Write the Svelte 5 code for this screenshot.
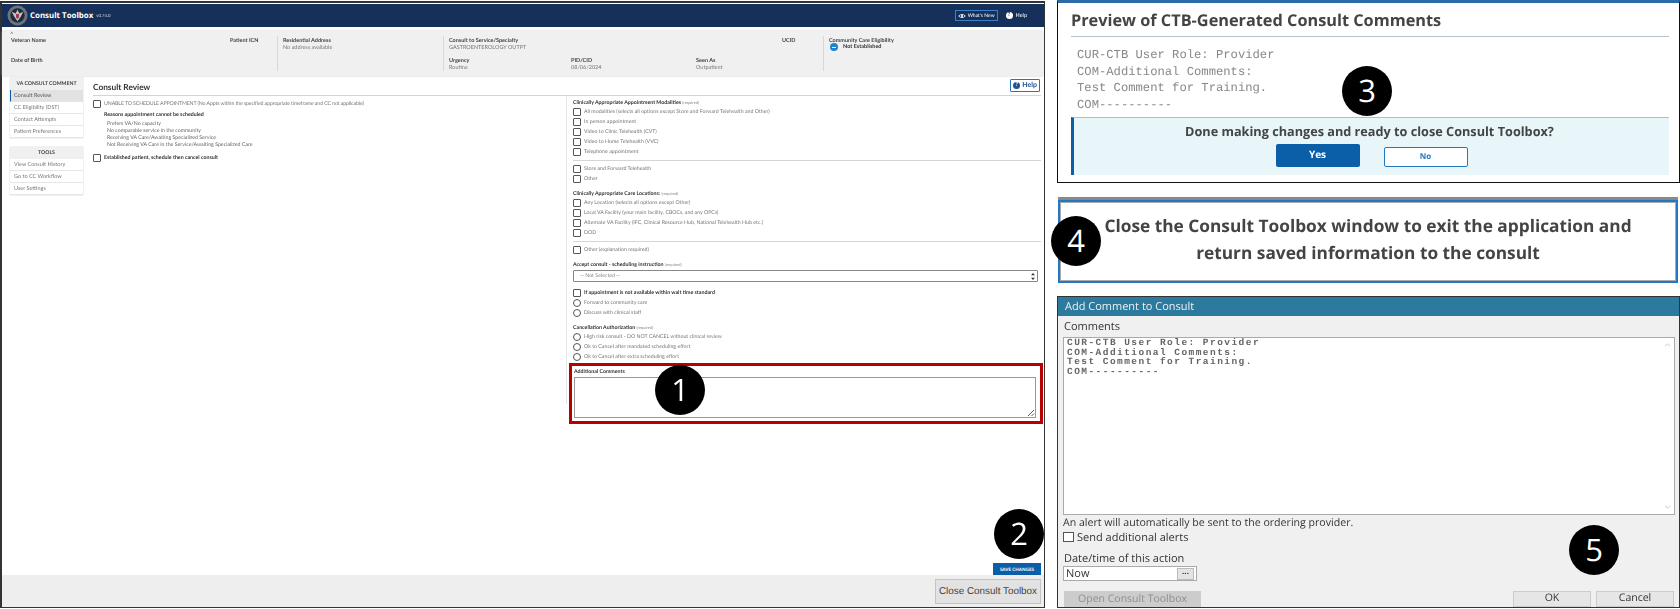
<script lang="ts">
  const patientCols = [
    { label: "Veteran Name", x: 0 },
    { label: "Patient ICN", x: 219 }
  ];
  const navMain = ["Consult Review", "CC Eligibility (DST)", "Contact Attempts", "Patient Preferences"];
  const navTools = ["View Consult History", "Go to CC Workflow", "User Settings"];
  const reasons = [
    "Prefers VA/No capacity",
    "No comparable service in the community",
    "Receiving VA Care/Awaiting Specialized Service",
    "Not Receiving VA Care in the Service/Awaiting Specialized Care"
  ];
  const modalities = [
    "All modalities (selects all options except Store and Forward Telehealth and Other)",
    "In person appointment",
    "Video to Clinic Telehealth (CVT)",
    "Video to Home Telehealth (VVC)",
    "Telephone appointment"
  ];
  const locations = [
    "Any Location (selects all options except Other)",
    "Local VA Facility (your main facility, CBOCs, and any OPCs)",
    "Alternate VA Facility (IFC, Clinical Resource Hub, National Telehealth Hub etc.)",
    "DOD"
  ];
  const cancelOpts = [
    "High risk consult - DO NOT CANCEL without clinical review",
    "Ok to Cancel after mandated scheduling effort",
    "Ok to Cancel after extra scheduling effort"
  ];
  const previewLines = ["CUR-CTB User Role: Provider", "COM-Additional Comments:", "Test Comment for Training.", "COM----------"];
  const badges = [
    { n: 1, x: 680, y: 390 },
    { n: 2, x: 1019, y: 534 },
    { n: 3, x: 1367, y: 91 },
    { n: 4, x: 1076, y: 241 },
    { n: 5, x: 1594, y: 550 }
  ];
</script>

<div class="page">
  <section class="toolbox">
    <header class="topbar">
      <svg class="seal" viewBox="0 0 22 22" aria-hidden="true">
        <circle cx="11" cy="11" r="10.5" fill="#6f7478" />
        <circle cx="11" cy="11" r="7.5" fill="#1d2a44" />
        <path d="M11 5 L13 9 L17 7 L14.5 12 L11 17 L7.5 12 L5 7 L9 9 Z" fill="#c4c4c4" />
        <path d="M9.5 9.5 H12.5 V13 L11 14.5 L9.5 13 Z" fill="#a8323a" />
      </svg>
      <span class="brand">Consult Toolbox</span>
      <span class="version">v0.74.0</span>
      <span class="spacer"></span>
      <span class="whatsnew">
        <svg viewBox="0 0 12 8" width="8" height="6" aria-hidden="true"><path d="M1 4 Q6 -1 11 4 Q6 9 1 4 Z" fill="none" stroke="#fff" stroke-width="1.2" /><circle cx="6" cy="4" r="1.6" fill="#fff" /></svg>
        What's New
      </span>
      <span class="tophelp"><i>?</i> Help</span>
    </header>

    <div class="patient">
      <span class="chev">^</span>
      <div class="pcell first">
        <div class="pair">
          {#each patientCols as c}
            <b style="left:{c.x}px">{c.label}</b>
          {/each}
        </div>
        <div class="pair low"><b>Date of Birth</b></div>
      </div>
      <div class="pcell addr">
        <div class="pair"><b>Residential Address</b><span>No address available</span></div>
      </div>
      <div class="pcell consult">
        <div class="pair"><b>Consult to Service/Specialty</b><span>GASTROENTEROLOGY OUTPT</span></div>
        <div class="pair low triple">
          <div class="urg"><b>Urgency</b><span>Routine</span></div>
          <div class="pid"><b>PID/CID</b><span>08/06/2024</span></div>
          <div><b>Seen As</b><span>Outpatient</span></div>
        </div>
        <b class="ucid">UCID</b>
      </div>
      <div class="pcell elig">
        <div class="pair"><b>Community Care Eligibility</b></div>
        <div class="status"><i></i><strong>Not Established</strong></div>
      </div>
    </div>

    <div class="work">
      <aside class="side">
        <nav class="navcard">
          <h4>VA CONSULT COMMENT</h4>
          {#each navMain as item, i}
            <div class="navrow" class:active={i === 0}>{item}</div>
          {/each}
        </nav>
        <nav class="navcard">
          <h4 class="tools">TOOLS</h4>
          {#each navTools as item}
            <div class="navrow">{item}</div>
          {/each}
        </nav>
      </aside>

      <main class="review">
        <div class="titlerow">
          <h2>Consult Review</h2>
          <span class="helpbtn"><i>?</i>Help</span>
        </div>
        <div class="cols">
          <div class="leftcol">
            <label class="row unable"><span class="box"></span>UNABLE TO SCHEDULE APPOINTMENT (No Appts within the specified appropriate timeframe and CC not applicable)</label>
            <div class="reasons">
              <strong>Reasons appointment cannot be scheduled</strong>
              {#each reasons as r}<div>{r}</div>{/each}
            </div>
            <label class="row est"><span class="box"></span><strong>Established patient, schedule then cancel consult</strong></label>
          </div>

          <div class="rightcol">
            <div class="head">Clinically Appropriate Appointment Modalities <small>(required)</small></div>
            {#each modalities as m}
              <label class="row"><span class="box"></span>{m}</label>
            {/each}
            <hr />
            <label class="row"><span class="box"></span>Store and Forward Telehealth</label>
            <label class="row"><span class="box"></span>Other</label>
            <div class="head gap">Clinically Appropriate Care Locations: <small>(required)</small></div>
            {#each locations as m}
              <label class="row"><span class="box"></span>{m}</label>
            {/each}
            <hr />
            <label class="row"><span class="box"></span>Other (explanation required)</label>
            <div class="head gap">Accept consult - scheduling instruction <small>(required)</small></div>
            <div class="selectbox">
              -- Not Selected --
              <svg viewBox="0 0 5 9" width="4" height="7" aria-hidden="true"><path d="M2.5 0 L5 3 H0 Z M2.5 9 L0 6 H5 Z" fill="#333" /></svg>
            </div>
            <label class="row mt"><span class="box"></span><strong>If appointment is not available within wait time standard</strong></label>
            <label class="row"><span class="box round"></span>Forward to community care</label>
            <label class="row"><span class="box round"></span>Discuss with clinical staff</label>
            <div class="head gap2">Cancellation Authorization <small>(required)</small></div>
            {#each cancelOpts as m}
              <label class="row"><span class="box round"></span>{m}</label>
            {/each}
            <div class="comments">
              <div class="head">Additional Comments</div>
              <div class="area">
                <svg viewBox="0 0 8 8" width="8" height="8" aria-hidden="true"><path d="M1 7 L7 1 M4.5 7 L7 4.5" stroke="#444" stroke-width="0.9" /></svg>
              </div>
            </div>
          </div>
        </div>
        <div class="savewrap"><span class="save">SAVE CHANGES</span></div>
      </main>
    </div>

    <footer class="foot"><span class="closebtn">Close Consult Toolbox</span></footer>
  </section>

  <div class="stack">
    <section class="preview">
      <h3>Preview of CTB-Generated Consult Comments</h3>
      <div class="mono">
        {#each previewLines as l}<div>{l}</div>{/each}
      </div>
      <div class="ask">
        <strong>Done making changes and ready to close Consult Toolbox?</strong>
        <div class="askbtns"><span class="yes">Yes</span><span class="no">No</span></div>
      </div>
    </section>

    <section class="notice">
      <div class="noticein">Close the Consult Toolbox window to exit the application and<br />return saved information to the consult</div>
    </section>

    <section class="dialog">
      <div class="dtitle">Add Comment to Consult</div>
      <div class="dbody">
        <div class="dlabel">Comments</div>
        <div class="dtext">
          <div class="dlines">
            {#each previewLines as l}<div>{l}</div>{/each}
          </div>
          <div class="dscroll">
            <svg viewBox="0 0 8 5" width="7" height="4" aria-hidden="true"><path d="M1 4 L4 1 L7 4" fill="none" stroke="#bbb" /></svg>
            <svg viewBox="0 0 8 5" width="7" height="4" aria-hidden="true"><path d="M1 1 L4 4 L7 1" fill="none" stroke="#bbb" /></svg>
          </div>
        </div>
        <div class="alert">An alert will automatically be sent to the ordering provider.</div>
        <div class="sendrow"><span class="dcheck"></span>Send additional alerts</div>
        <div class="dlabel dt">Date/time of this action</div>
        <div class="nowbox">Now<span class="dots">...</span></div>
        <div class="dbtns">
          <span class="openbtn">Open Consult Toolbox</span>
          <span class="spacer"></span>
          <span class="okbtn">OK</span>
          <span class="okbtn">Cancel</span>
        </div>
      </div>
    </section>
  </div>

  {#each badges as b}
    <div class="badge" style="left:{b.x - 25}px;top:{b.y - 25}px">{b.n}</div>
  {/each}
</div>

<style>
  :global(body) {
    margin: 0;
    background: #fff;
  }

  .page {
    position: relative;
    width: 1680px;
    height: 609px;
    overflow: hidden;
    display: flex;
    font-family: Lato, "Open Sans", sans-serif;
    color: #555;
    text-rendering: geometricPrecision;
  }

  .spacer {
    flex: 1;
  }

  /* left window */
  .toolbox {
    width: 1045px;
    height: 607px;
    margin-top: 1px;
    box-sizing: border-box;
    border: 1px solid #333;
    border-top-width: 2px;
    border-left-width: 2px;
    display: flex;
    flex-direction: column;
    font-size: 5.25px;
    filter: blur(0.4px);
  }

  .topbar {
    height: 23px;
    margin-top: 1px;
    flex: none;
    background: #15305a;
    color: #fff;
    display: flex;
    align-items: center;
    padding: 0 17px 0 5px;
  }

  .seal {
    width: 21px;
    height: 21px;
    margin-right: 2px;
  }

  .brand {
    font-family: "Open Sans", sans-serif;
    font-weight: 700;
    font-size: 7.9px;
  }

  .version {
    font-size: 4.3px;
    margin-left: 3px;
    opacity: 0.8;
  }

  .whatsnew {
    display: flex;
    align-items: center;
    gap: 2px;
    border: 1px solid #3b82c4;
    height: 9px;
    padding: 0 2px;
    font-size: 5px;
    margin-right: 8px;
  }

  .tophelp {
    display: flex;
    align-items: center;
    gap: 3px;
    font-size: 5.5px;
  }

  .tophelp i {
    width: 7px;
    height: 7px;
    border-radius: 50%;
    background: #fff;
    color: #15305a;
    font-style: normal;
    font-weight: 700;
    font-size: 5.5px;
    line-height: 7px;
    text-align: center;
  }

  .patient {
    position: relative;
    height: 45px;
    margin: 4px 1px 0 0;
    flex: none;
    box-sizing: border-box;
    background: #f0f0f0;
    border-radius: 2px;
    box-shadow: 0 0 2px #bbb;
    padding: 5px 0;
    display: flex;
    font-size: 5.5px;
  }

  .chev {
    position: absolute;
    left: 8px;
    top: 0;
    font-size: 6px;
  }

  .pcell {
    position: relative;
    box-sizing: border-box;
    height: 35px;
    padding-left: 5px;
    border-right: 1px solid #d8d8d8;
  }

  .pcell.first {
    width: 276px;
    padding-left: 9px;
  }

  .pcell.addr {
    width: 166px;
  }

  .pcell.consult {
    width: 380px;
  }

  .pcell.elig {
    border: none;
  }

  .pair {
    position: relative;
    height: 20px;
    display: flex;
    flex-direction: column;
    padding-top: 1.5px;
    box-sizing: border-box;
  }

  .pair b,
  .triple b {
    display: block;
    color: #444;
    font-weight: 700;
    height: 7px;
    line-height: 7px;
  }

  .pair span,
  .triple span {
    display: block;
    height: 7.5px;
    line-height: 7.5px;
    color: #777;
  }

  .first .pair b {
    position: absolute;
  }

  .triple {
    flex-direction: row;
    display: flex;
    height: 16px;
  }

  .triple .urg {
    width: 122px;
  }

  .triple .pid {
    width: 125px;
  }

  .ucid {
    position: absolute;
    left: 338px;
    top: 2px;
    color: #444;
    line-height: 7px;
  }

  .status {
    display: flex;
    align-items: center;
    gap: 5px;
    margin-top: -13px;
    padding-left: 1px;
  }

  .status i {
    width: 8px;
    height: 8px;
    border-radius: 50%;
    background: #1b86cf;
    position: relative;
  }

  .status i::after {
    content: "";
    position: absolute;
    left: 2px;
    right: 2px;
    top: 3.5px;
    height: 1px;
    background: #fff;
  }

  .status strong {
    color: #333;
  }

  .work {
    flex: 1;
    min-height: 0;
    display: flex;
    padding: 2px 3px 0 8px;
  }

  .side {
    width: 73px;
    flex: none;
    display: flex;
    flex-direction: column;
    gap: 9px;
  }

  .navcard {
    box-shadow: 0 0 1px #aaa;
  }

  .navcard h4 {
    margin: 0;
    height: 12px;
    background: #f0f0f0;
    color: #444;
    font-size: 5.2px;
    font-weight: 700;
    line-height: 13px;
    text-align: center;
  }

  .navrow {
    height: 12px;
    box-sizing: border-box;
    line-height: 13.5px;
    padding-left: 4px;
    border-bottom: 1px solid #e6e6e6;
    color: #777;
    font-size: 5.5px;
  }

  .navrow.active {
    background: #e2e2e2;
    border-left: 1px solid #0b5ea8;
    padding-left: 3px;
    color: #555;
  }

  .review {
    flex: 1;
    min-width: 0;
    display: flex;
    flex-direction: column;
    margin-left: 10px;
  }

  .titlerow {
    height: 18px;
    flex: none;
    display: flex;
    align-items: center;
    justify-content: space-between;
    border-bottom: 1px solid #d5d5d5;
    padding-right: 1px;
    box-sizing: border-box;
  }

  .titlerow h2 {
    margin: 0;
    font-size: 8.3px;
    font-weight: 700;
    color: #333;
  }

  .helpbtn {
    display: flex;
    align-items: center;
    gap: 2px;
    height: 11px;
    margin-top: -3px;
    padding: 0 2px;
    border: 1px solid #2378c3;
    border-radius: 1px;
    font-size: 7px;
    font-weight: 700;
    color: #205493;
  }

  .helpbtn i {
    width: 7px;
    height: 7px;
    border-radius: 50%;
    background: #205493;
    color: #fff;
    font-size: 5.5px;
    font-style: normal;
    line-height: 7px;
    text-align: center;
  }

  .cols {
    display: flex;
  }

  .leftcol {
    width: 473px;
    flex: none;
    padding-top: 3px;
  }

  .row {
    display: flex;
    align-items: center;
    height: 10px;
    white-space: nowrap;
    color: #777;
  }

  .row.unable {
    letter-spacing: -0.12px;
  }

  .box {
    width: 6px;
    height: 6px;
    flex: none;
    border: 1px solid #555;
    border-radius: 1px;
    margin-right: 3px;
    background: #fff;
  }

  .box.round {
    border-radius: 50%;
  }

  .leftcol .box {
    margin-right: 3px;
  }

  .reasons {
    padding: 3px 0 0 11px;
    line-height: 7px;
    color: #666;
  }

  .reasons strong {
    display: block;
    color: #333;
    margin-bottom: 1.5px;
    margin-left: 0;
  }

  .reasons div {
    padding-left: 3px;
  }

  .est {
    margin-top: 4.5px;
  }

  .est strong,
  .mt strong {
    color: #333;
  }

  .rightcol {
    flex: 1;
    min-width: 0;
    box-sizing: border-box;
    padding: 1px 0 0 6px;
    border-left: 1px solid #e4e4e4;
    height: 308px;
  }

  .head {
    height: 10px;
    line-height: 12px;
    color: #333;
    font-weight: 700;
    white-space: nowrap;
  }

  .head small {
    font-size: 4px;
    font-weight: 400;
    color: #888;
  }

  .head.gap {
    margin-top: 4px;
  }

  .head.gap2 {
    margin-top: 4px;
  }

  .rightcol hr {
    margin: 3px 0;
    border: none;
    border-top: 1px solid #d5d5d5;
  }

  .selectbox {
    height: 12px;
    margin-top: 1px;
    box-sizing: border-box;
    border: 1px solid #888;
    border-radius: 1px;
    display: flex;
    align-items: center;
    justify-content: space-between;
    padding: 0 2px 0 6px;
    color: #888;
    margin-right: 3px;
  }

  .mt {
    margin-top: 6px;
  }

  .comments {
    margin: 1px -2px 0 -4px;
    height: 61px;
    box-sizing: border-box;
    border: 3px solid #b80000;
    padding: 0 4px 0 2px;
  }

  .comments .head {
    height: 11px;
    line-height: 13px;
  }

  .area {
    height: 41px;
    box-sizing: border-box;
    border: 1px solid #999;
    display: flex;
    align-items: flex-end;
    justify-content: flex-end;
  }

  .savewrap {
    margin-top: auto;
    display: flex;
    justify-content: flex-end;
    padding-right: 0;
  }

  .save {
    width: 48px;
    height: 12px;
    background: #0b5ea8;
    color: #fff;
    font-size: 4.6px;
    font-weight: 700;
    line-height: 12px;
    text-align: center;
  }

  .foot {
    height: 32px;
    flex: none;
    background: #eee;
    display: flex;
    align-items: center;
    justify-content: flex-end;
    padding-right: 3px;
  }

  .closebtn {
    width: 106px;
    height: 25px;
    box-sizing: border-box;
    background: #e2e2e2;
    border: 1px solid #c4c4c4;
    font-family: "Liberation Sans", sans-serif;
    font-size: 9.9px;
    line-height: 23px;
    text-align: center;
    color: #444;
  }

  /* right column */
  .stack {
    width: 623px;
    margin-left: 12px;
    display: flex;
    flex-direction: column;
    filter: blur(0.4px);
  }

  .preview {
    height: 183px;
    flex: none;
    box-sizing: border-box;
    border: 1px solid #111;
    border-top: 3px solid #2b6ca8;
    padding: 0 0 6px 13px;
    background: #fff;
  }

  .preview h3 {
    margin: 0;
    height: 33px;
    margin-right: 10px;
    border-bottom: 1px solid #b7c2cc;
    font-family: "Open Sans", sans-serif;
    font-size: 16.3px;
    font-weight: 700;
    line-height: 35px;
    color: #444;
  }

  .mono {
    height: 80px;
    padding: 10px 0 0 6px;
    box-sizing: border-box;
    font-family: "Liberation Mono", monospace;
    font-size: 12.2px;
    line-height: 16.6px;
    color: #888;
  }

  .ask {
    height: 58px;
    margin-right: 10px;
    box-sizing: border-box;
    background: #e8f6fa;
    border-left: 3px solid #0b5ea8;
    border-top: 1px solid #bbb;
    text-align: center;
    padding-top: 5px;
    font-family: "Open Sans", sans-serif;
    font-size: 12.7px;
    color: #444;
  }

  .ask strong {
    display: block;
    line-height: 16px;
    margin-left: -4px;
  }

  .askbtns {
    display: flex;
    justify-content: center;
    align-items: flex-end;
    gap: 24px;
    margin-top: 5px;
    margin-left: 0;
  }

  .yes {
    width: 84px;
    height: 23px;
    background: #0b5ea8;
    border-radius: 2px;
    color: #fff;
    font-weight: 700;
    font-size: 10px;
    line-height: 21px;
  }

  .no {
    width: 84px;
    height: 20px;
    box-sizing: border-box;
    background: #fff;
    border: 1px solid #2378c3;
    border-radius: 2px;
    color: #2378c3;
    font-weight: 700;
    font-size: 8px;
    line-height: 18px;
  }

  .notice {
    height: 86px;
    flex: none;
    margin: 14px 2px 0 1px;
    box-sizing: border-box;
    padding-top: 3px;
    background: #888;
  }

  .noticein {
    height: 83px;
    box-sizing: border-box;
    background: #fff;
    border: 2px solid #2378c3;
    outline: 1px solid #aaa;
    outline-offset: -3px;
    text-align: center;
    font-family: "Open Sans", sans-serif;
    font-size: 17.3px;
    font-weight: 700;
    line-height: 27px;
    padding-top: 11px;
    color: #444;
  }

  .dialog {
    height: 312px;
    flex: none;
    margin-top: 13px;
    box-sizing: border-box;
    border: 1px solid #333;
    background: #f0f0f0;
    display: flex;
    flex-direction: column;
    font-family: "Open Sans", sans-serif;
    font-size: 11px;
    color: #333;
  }

  .dtitle {
    height: 19px;
    flex: none;
    background: #2c7a9e;
    color: #f0f0f0;
    padding-left: 7px;
    line-height: 19px;
    font-size: 11px;
  }

  .dbody {
    flex: 1;
    display: flex;
    flex-direction: column;
    padding: 5px 4px 0 5px;
    min-height: 0;
  }

  .dlabel {
    height: 17px;
    line-height: 11px;
    padding-left: 1px;
  }

  .dtext {
    height: 178px;
    flex: none;
    box-sizing: border-box;
    border: 1px solid #aaa;
    background: #fff;
    display: flex;
  }

  .dlines {
    flex: 1;
    padding: 0 0 0 3px;
    font-family: "Liberation Mono", monospace;
    font-weight: 700;
    font-size: 9.5px;
    letter-spacing: 1.45px;
    line-height: 9.7px;
    color: #666;
  }

  .dscroll {
    width: 14px;
    display: flex;
    flex-direction: column;
    justify-content: space-between;
    align-items: center;
    padding: 5px 0;
  }

  .alert {
    height: 15px;
    line-height: 15px;
    font-size: 10.6px;
    margin-top: 1px;
    white-space: nowrap;
  }

  .sendrow {
    display: flex;
    align-items: center;
    gap: 3px;
    height: 13px;
  }

  .dcheck {
    width: 9px;
    height: 8px;
    background: #fff;
    border: 1px solid #555;
  }

  .dlabel.dt {
    margin-top: 8px;
    height: 15px;
    line-height: 13px;
  }

  .nowbox {
    width: 134px;
    height: 15px;
    box-sizing: border-box;
    background: #fff;
    border: 1px solid #aaa;
    padding-left: 2px;
    display: flex;
    align-items: center;
    justify-content: space-between;
    line-height: 13px;
  }

  .dots {
    width: 15px;
    height: 10px;
    margin-right: 2px;
    background: #e4e4e4;
    border: 1px solid #bbb;
    font-size: 8px;
    line-height: 5px;
    text-align: center;
    font-weight: 700;
  }

  .dbtns {
    display: flex;
    align-items: flex-start;
    gap: 5px;
    margin-top: 10px;
    padding: 0 1px 0 1px;
  }

  .openbtn {
    width: 137px;
    height: 16px;
    background: #ccc;
    color: #8e8e8e;
    text-align: center;
    line-height: 16px;
    font-size: 10.5px;
  }

  .okbtn {
    width: 78px;
    height: 16px;
    box-sizing: border-box;
    background: #e6e6e6;
    border: 1px solid #ccc;
    text-align: center;
    line-height: 12px;
    font-size: 10.5px;
  }

  /* numbered callouts on top of the screenshots */
  .badge {
    position: absolute;
    width: 50px;
    height: 50px;
    border-radius: 50%;
    background: #000;
    color: #fff;
    font-family: "Open Sans", sans-serif;
    font-size: 31px;
    line-height: 50px;
    text-align: center;
  }
</style>
